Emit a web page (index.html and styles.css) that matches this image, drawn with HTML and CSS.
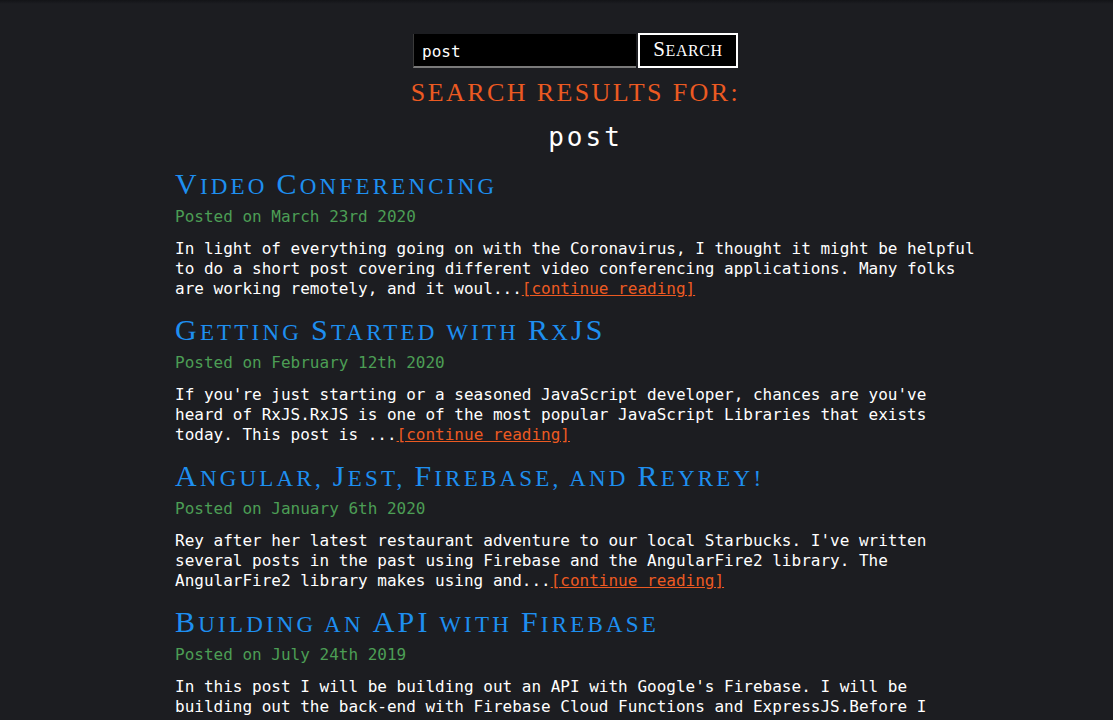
FILE: index.html
```html
<!DOCTYPE html>
<html lang="en">
<head>
<meta charset="utf-8">
<title>Search results</title>
<link rel="stylesheet" href="styles.css">
</head>
<body>
<main class="page">
  <form class="search">
    <input class="search-input" type="text" value="post">
    <button class="search-btn" type="button"><span class="cap">S</span>earch</button>
  </form>
  <h2 class="results-label">SEARCH RESULTS FOR:</h2>
  <h1 class="query">post</h1>
  <section class="posts">
    <article class="post">
      <h3 class="post-title"><span class="cap">V</span>ideo <span class="cap">C</span>onferencing</h3>
      <div class="post-date">Posted on March 23rd 2020</div>
      <p class="post-excerpt">In light of everything going on with the Coronavirus, I thought it might be helpful to do a short post covering different video conferencing applications. Many folks are working remotely, and it woul...<a class="more" href="#">[continue reading]</a></p>
    </article>
    <article class="post">
      <h3 class="post-title"><span class="cap">G</span>etting <span class="cap">S</span>tarted with <span class="cap">R</span>x<span class="cap">JS</span></h3>
      <div class="post-date">Posted on February 12th 2020</div>
      <p class="post-excerpt">If you're just starting or a seasoned JavaScript developer, chances are you've heard of RxJS.RxJS is one of the most popular JavaScript Libraries that exists today. This post is ...<a class="more" href="#">[continue reading]</a></p>
    </article>
    <article class="post">
      <h3 class="post-title"><span class="cap">A</span>ngular, <span class="cap">J</span>est, <span class="cap">F</span>irebase, and <span class="cap">R</span>eyrey!</h3>
      <div class="post-date">Posted on January 6th 2020</div>
      <p class="post-excerpt">Rey after her latest restaurant adventure to our local Starbucks. I've written several posts in the past using Firebase and the AngularFire2 library. The AngularFire2 library makes using and...<a class="more" href="#">[continue reading]</a></p>
    </article>
    <article class="post">
      <h3 class="post-title"><span class="cap">B</span>uilding an <span class="cap">API</span> with <span class="cap">F</span>irebase</h3>
      <div class="post-date">Posted on July 24th 2019</div>
      <p class="post-excerpt">In this post I will be building out an API with Google's Firebase. I will be building out the back-end with Firebase Cloud Functions and ExpressJS.Before I start, I want to point out that this post is long...<a class="more" href="#">[continue reading]</a></p>
    </article>
  </section>
</main>
</body>
</html>
```

FILE: styles.css
```css
html, body {
  margin: 0;
  padding: 0;
}
body {
  background: #1c1d21;
  background-image: linear-gradient(#131417 0, #1c1d21 4px);
  background-repeat: no-repeat;
  color: #ffffff;
  font-family: "DejaVu Sans Mono", "Liberation Mono", monospace;
  font-size: 16px;
  line-height: 20px;
  padding-left: 38px;
  min-height: 720px;
  box-sizing: border-box;
}
.page {
  width: 801px;
  margin: 0 auto;
  padding-top: 33px;
}
.search {
  display: flex;
  justify-content: center;
  align-items: flex-start;
  gap: 2px;
  margin: 0;
}
.search-input {
  width: 223px;
  height: 34px;
  box-sizing: border-box;
  margin: 1px 0 0 0;
  background: #000;
  border: none;
  border-bottom: 2px solid #7a7a7a;
  border-left: 1px solid #3a3a3a;
  color: #fff;
  font-family: "DejaVu Sans Mono", monospace;
  font-size: 16px;
  padding: 2px 8px 0;
  outline: none;
}
.search-btn {
  width: 100px;
  height: 35px;
  box-sizing: border-box;
  background: #000;
  border: 2px solid #ffffff;
  color: #fff;
  font-family: "Liberation Serif", serif;
  text-transform: uppercase;
  font-size: 16px;
  letter-spacing: 0.6px;
  padding: 0 0 2px;
  cursor: pointer;
}
.search-btn .cap {
  font-size: 21px;
}
.results-label {
  margin: 9px 0 0;
  text-align: center;
  color: #ec5a22;
  font-family: "Liberation Serif", serif;
  font-weight: normal;
  font-size: 26px;
  line-height: 32px;
  letter-spacing: 2.4px;
}
.query {
  margin: 13px 0 0;
  padding-left: 20px;
  text-align: center;
  font-family: "DejaVu Sans Mono", monospace;
  font-weight: normal;
  font-size: 26px;
  line-height: 30px;
  letter-spacing: 3px;
}
.posts {
  margin-top: 17px;
}
.post {
  margin-bottom: 16px;
}
.post-title {
  margin: 0;
  height: 32px;
  padding-top: 2px;
  color: #1e8ff0;
  font-family: "Liberation Serif", serif;
  font-weight: normal;
  text-transform: uppercase;
  font-size: 23px;
  line-height: 32px;
  letter-spacing: 3.2px;
}
.post-title .cap {
  font-size: 30px;
  line-height: 0;
}
.post-date {
  margin-top: 2px;
  color: #4c9e55;
  line-height: 24px;
}
.post-excerpt {
  margin: 10px 0 0;
  line-height: 20px;
}
.more {
  color: #ec5a22;
  text-decoration: underline;
}
```
